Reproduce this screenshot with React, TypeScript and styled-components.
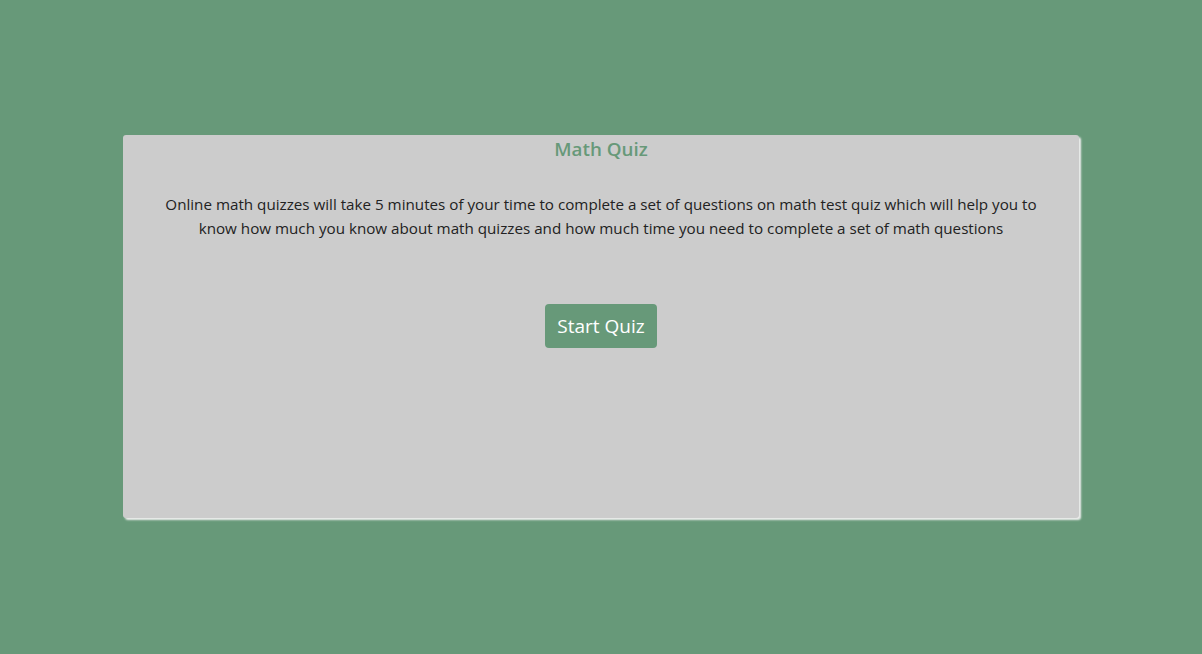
import React from "react";
import styled, { createGlobalStyle } from "styled-components";

const Global = createGlobalStyle`
  html, body { margin: 0; padding: 0; }
  body {
    background: #679979;
    font-family: "Open Sans", "Noto Sans", sans-serif;
    min-height: 100vh;
  }
`;

const Page = styled.div`
  padding-top: 135px;
  display: flex;
  justify-content: center;
`;

const Card = styled.div`
  box-sizing: border-box;
  width: 956px;
  height: 383px;
  background: #cccccc;
  border-radius: 3px;
  box-shadow: 2px 2px 2px #eeeeee;
  display: flex;
  flex-direction: column;
  align-items: center;
  padding: 0 30px;
`;

const Title = styled.h1`
  margin: 2px 0 0;
  font-size: 18.8px;
  font-weight: 600;
  color: #679979;
  line-height: 24px;
`;

const Text = styled.p`
  margin: 31px 0 0;
  font-size: 15.2px;
  line-height: 24px;
  color: #222;
  text-align: center;
`;

const Button = styled.button`
  margin-top: 64px;
  width: 112px;
  height: 44px;
  border: none;
  border-radius: 4px;
  background: #679979;
  color: #fff;
  font-family: inherit;
  font-size: 19px;
  cursor: pointer;
`;

export default function App() {
  return (
    <>
      <Global />
      <Page>
        <Card>
          <Title>Math Quiz</Title>
          <Text>
            Online math quizzes will take 5 minutes of your time to complete a set of questions on math test quiz which will help you to know how much you know about math quizzes and how much time you need to complete a set of math questions
          </Text>
          <Button>Start Quiz</Button>
        </Card>
      </Page>
    </>
  );
}
